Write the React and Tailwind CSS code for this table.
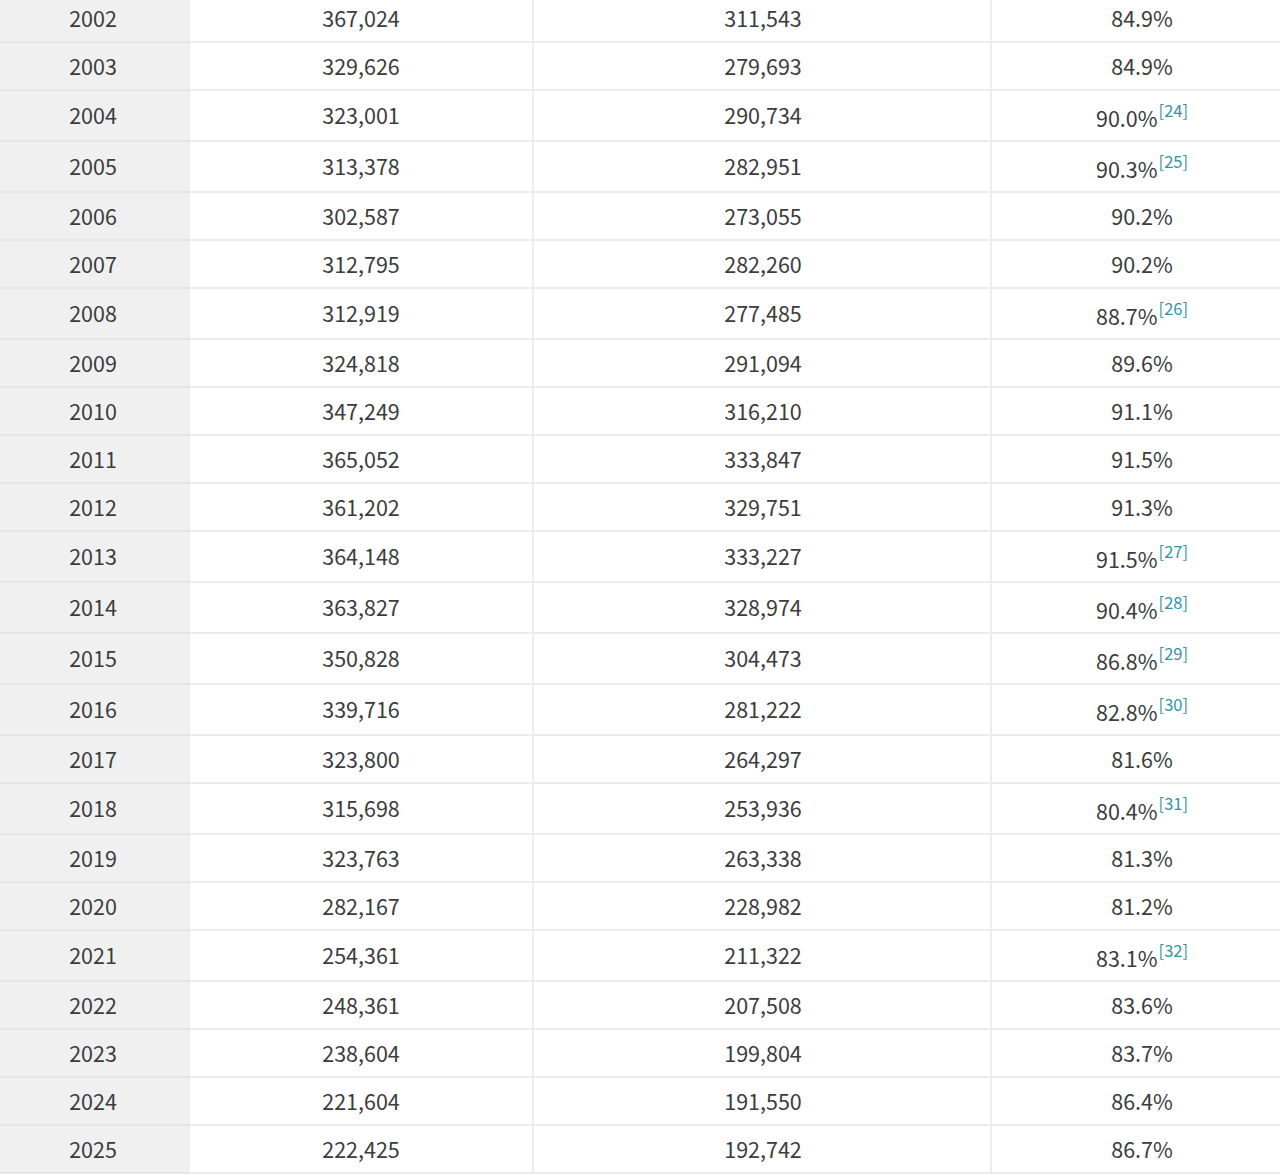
import React from "react";

const rows = [
  ["2002", "367,024", "311,543", "84.9%"],
  ["2003", "329,626", "279,693", "84.9%"],
  ["2004", "323,001", "290,734", "90.0%", "24"],
  ["2005", "313,378", "282,951", "90.3%", "25"],
  ["2006", "302,587", "273,055", "90.2%"],
  ["2007", "312,795", "282,260", "90.2%"],
  ["2008", "312,919", "277,485", "88.7%", "26"],
  ["2009", "324,818", "291,094", "89.6%"],
  ["2010", "347,249", "316,210", "91.1%"],
  ["2011", "365,052", "333,847", "91.5%"],
  ["2012", "361,202", "329,751", "91.3%"],
  ["2013", "364,148", "333,227", "91.5%", "27"],
  ["2014", "363,827", "328,974", "90.4%", "28"],
  ["2015", "350,828", "304,473", "86.8%", "29"],
  ["2016", "339,716", "281,222", "82.8%", "30"],
  ["2017", "323,800", "264,297", "81.6%"],
  ["2018", "315,698", "253,936", "80.4%", "31"],
  ["2019", "323,763", "263,338", "81.3%"],
  ["2020", "282,167", "228,982", "81.2%"],
  ["2021", "254,361", "211,322", "83.1%", "32"],
  ["2022", "248,361", "207,508", "83.6%"],
  ["2023", "238,604", "199,804", "83.7%"],
  ["2024", "221,604", "191,550", "86.4%"],
  ["2025", "222,425", "192,742", "86.7%"],
];

export default function App() {
  return (
    <div
      className="w-[1280px] h-[1175px] overflow-hidden bg-white text-[#3a3c3e]"
      style={{ fontFamily: '"Noto Sans CJK KR", "Noto Sans", sans-serif' }}
    >
      <div className="w-[1292px] mt-[-5px] text-[21.5px]">
        {rows.map(([y, a, b, p, ref]) => (
          <div
            key={y}
            className={`grid grid-cols-[190px_344px_458px_300px] ${ref ? "h-[51px]" : "h-[48px]"}`}
          >
            <div className="flex items-center justify-center bg-[#f0f0f0] border-b-2 border-[#e6e6e6] pr-[4px]">
              {y}
            </div>
            <div className="flex items-center justify-center border-b-2 border-r-2 border-[#ededed]">
              {a}
            </div>
            <div className="flex items-center justify-center border-b-2 border-r-2 border-[#ededed] pl-[2px]">
              {b}
            </div>
            <div
              className={`flex items-center justify-center border-b-2 border-[#ededed] ${ref ? "pt-[6px]" : ""}`}
            >
              <span>
                {p}
                {ref && (
                  <sup className="text-[16.5px] top-[-10px] text-[#3493a3] ml-[1px]">
                    [{ref}]
                  </sup>
                )}
              </span>
            </div>
          </div>
        ))}
      </div>
    </div>
  );
}
